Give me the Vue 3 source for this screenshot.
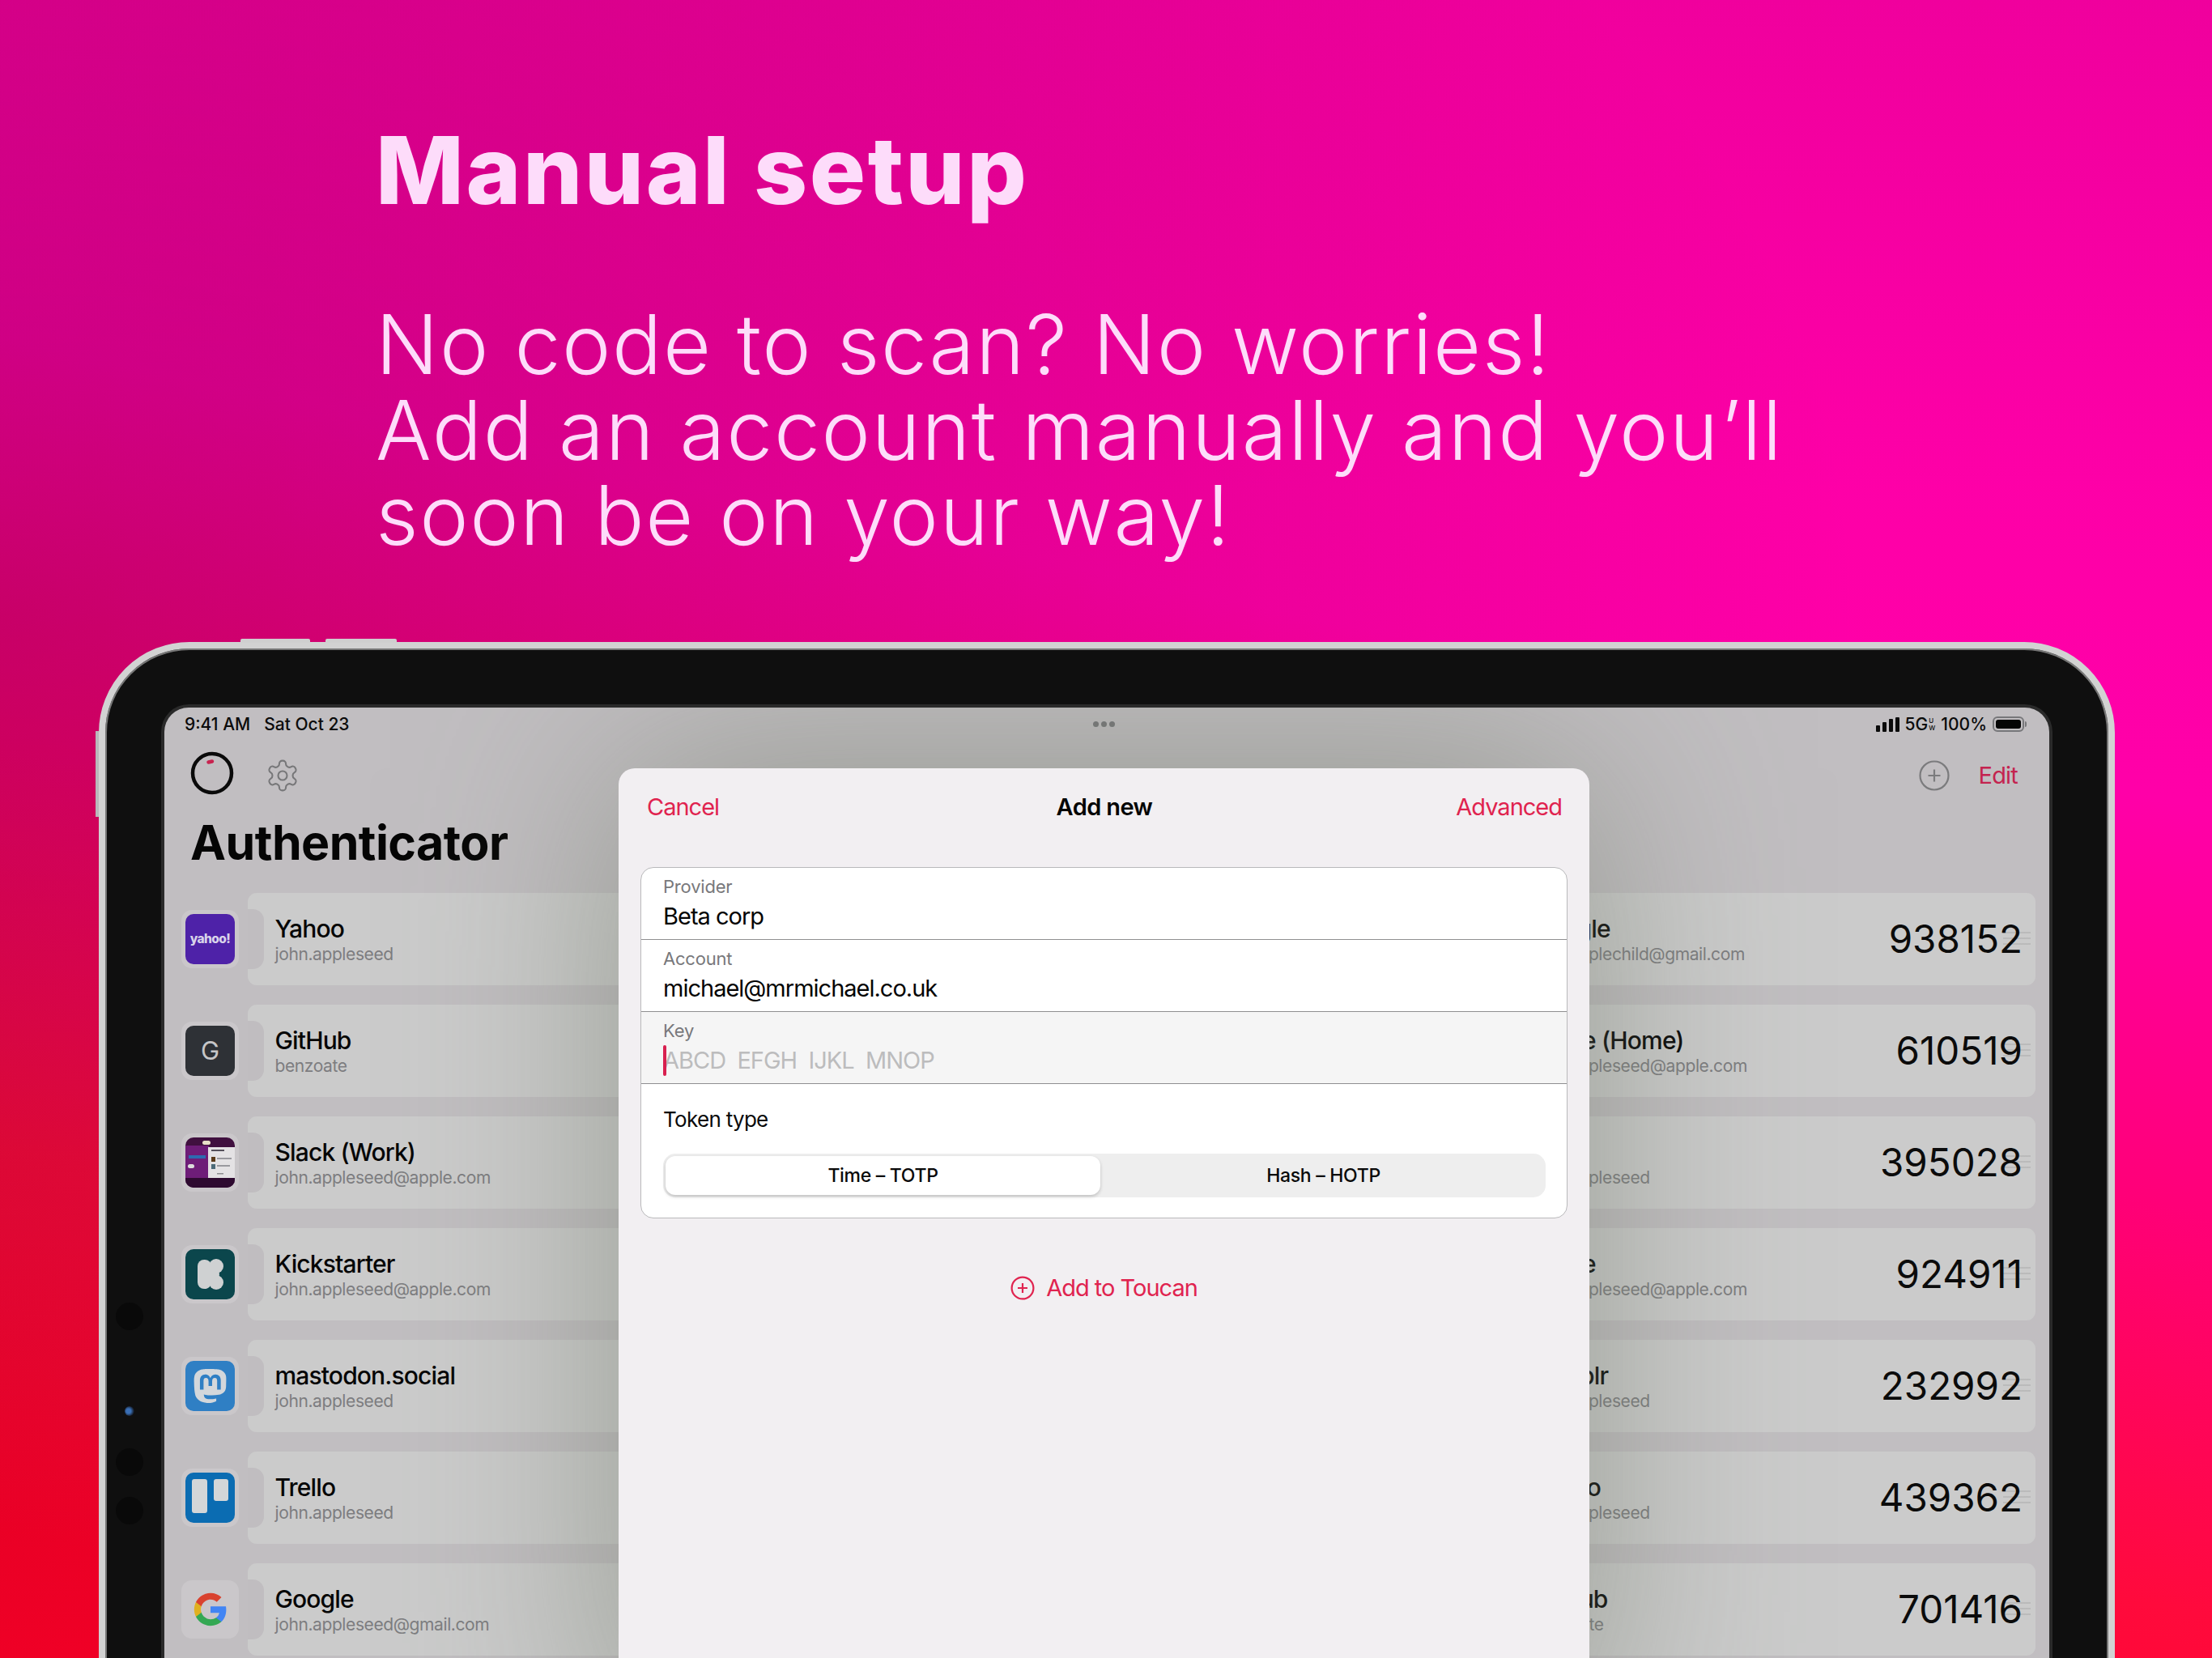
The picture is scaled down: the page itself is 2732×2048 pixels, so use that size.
<script setup>
const leftRows = [
  { name: 'Yahoo', sub: 'john.appleseed', icon: 'yahoo' },
  { name: 'GitHub', sub: 'benzoate', icon: 'github' },
  { name: 'Slack (Work)', sub: 'john.appleseed@apple.com', icon: 'slack' },
  { name: 'Kickstarter', sub: 'john.appleseed@apple.com', icon: 'kick' },
  { name: 'mastodon.social', sub: 'john.appleseed', icon: 'mastodon' },
  { name: 'Trello', sub: 'john.appleseed', icon: 'trello' },
  { name: 'Google', sub: 'john.appleseed@gmail.com', icon: 'google' },
]
const rightRows = [
  { name: 'Google', sub: 'john.applechild@gmail.com', code: '938152' },
  { name: 'Apple (Home)', sub: 'john.appleseed@apple.com', code: '610519' },
  { name: 'Box', sub: 'john.appleseed', code: '395028' },
  { name: 'Apple', sub: 'john.appleseed@apple.com', code: '924911' },
  { name: 'Tumblr', sub: 'john.appleseed', code: '232992' },
  { name: 'Yahoo', sub: 'john.appleseed', code: '439362' },
  { name: 'GitHub', sub: 'benzoate', code: '701416' },
]
const columns = [leftRows, rightRows]
const fields = [
  { label: 'Provider', value: 'Beta corp' },
  { label: 'Account', value: 'michael@mrmichael.co.uk' },
]
const keyPlaceholder = 'ABCD  EFGH  IJKL  MNOP'
</script>

<template>
  <div class="page">
    <header class="hero">
      <h1>Manual setup</h1>
      <p>No code to scan? No worries!<br />Add an account manually and you’ll<br />soon be on your way!</p>
    </header>

    <div class="device">
      <span class="hw vol-a"></span>
      <span class="hw vol-b"></span>
      <span class="hw side"></span>
      <span class="lens l1"></span>
      <span class="lens l2"></span>
      <span class="lens l3"></span>
      <span class="lens l4"></span>

      <div class="screen">
        <div class="status">
          <div class="status-left"><span>9:41 AM</span><span>Sat Oct 23</span></div>
          <div class="status-right">
            <span class="bars"><i></i><i></i><i></i><i></i></span>
            <span class="net">5G<span class="uw"><span>U</span><span>W</span></span></span>
            <span class="pct">100%</span>
            <span class="batt"><i></i></span>
          </div>
        </div>
        <div class="dots"><i></i><i></i><i></i></div>

        <div class="toolbar">
          <svg class="timer" width="54" height="54" viewBox="0 0 54 54">
            <circle cx="27" cy="27" r="24" fill="none" stroke="#0a0a0a" stroke-width="4.5" />
            <path d="M22.5 13.5 L27 12.5" stroke="#c8234f" stroke-width="4.5" stroke-linecap="round" />
          </svg>
          <svg class="gear" width="44" height="44" viewBox="0 0 24 24" fill="none" stroke="#777779" stroke-width="1.15">
            <path d="M12.22 2h-.44a2 2 0 0 0-2 2v.18a2 2 0 0 1-1 1.73l-.43.25a2 2 0 0 1-2 0l-.15-.08a2 2 0 0 0-2.73.73l-.22.38a2 2 0 0 0 .73 2.73l.15.1a2 2 0 0 1 1 1.72v.51a2 2 0 0 1-1 1.74l-.15.09a2 2 0 0 0-.73 2.73l.22.38a2 2 0 0 0 2.73.73l.15-.08a2 2 0 0 1 2 0l.43.25a2 2 0 0 1 1 1.73V20a2 2 0 0 0 2 2h.44a2 2 0 0 0 2-2v-.18a2 2 0 0 1 1-1.73l.43-.25a2 2 0 0 1 2 0l.15.08a2 2 0 0 0 2.73-.73l.22-.39a2 2 0 0 0-.73-2.73l-.15-.08a2 2 0 0 1-1-1.74v-.5a2 2 0 0 1 1-1.74l.15-.09a2 2 0 0 0 .73-2.73l-.22-.38a2 2 0 0 0-2.73-.73l-.15.08a2 2 0 0 1-2 0l-.43-.25a2 2 0 0 1-1-1.73V4a2 2 0 0 0-2-2z" />
            <circle cx="12" cy="12" r="3" />
          </svg>
          <svg class="plus" width="38" height="38" viewBox="0 0 38 38" fill="none" stroke="#7b7b7d" stroke-width="2.2">
            <circle cx="19" cy="19" r="17.5" />
            <path d="M19 11.5v15M11.5 19h15" />
          </svg>
          <span class="edit">Edit</span>
        </div>

        <h2 class="title">Authenticator</h2>

        <div class="lists">
          <div v-for="(rows, c) in columns" :key="c" class="col">
            <div v-for="row in rows" :key="row.name + row.sub" class="row">
              <div class="icon-wrap" :class="{ plain: row.icon === 'google' }">
                <div v-if="row.icon === 'yahoo'" class="icon yahoo">yahoo!</div>
                <div v-else-if="row.icon === 'github'" class="icon github">G</div>
                <svg v-else-if="row.icon === 'slack'" class="icon" viewBox="0 0 61 62">
                  <rect width="61" height="62" fill="#40103f" />
                  <rect y="10" width="29" height="40" fill="#6e1d78" />
                  <rect y="50" width="61" height="12" fill="#2e0a30" />
                  <rect x="28" y="12" width="33" height="38" fill="#e4e2e4" />
                  <rect x="4" y="22" width="21" height="4" fill="#2c6ab0" />
                  <rect x="21" y="4" width="10" height="5" rx="2.5" fill="#e8dfc8" />
                  <rect x="3" y="33" width="8" height="5" rx="2.5" fill="#dcdcdc" />
                  <rect x="32" y="15" width="16" height="2" fill="#55505a" />
                  <rect x="32" y="24" width="5" height="6" fill="#5a3a18" />
                  <rect x="39" y="25" width="18" height="2" fill="#9a9a9f" />
                  <rect x="32" y="33" width="5" height="6" fill="#4c6a78" />
                  <rect x="39" y="34" width="16" height="2" fill="#9a9a9f" />
                  <rect x="39" y="44" width="8" height="1.5" fill="#8d8d90" />
                </svg>
                <svg v-else-if="row.icon === 'kick'" class="icon" viewBox="0 0 61 62">
                  <rect width="61" height="62" fill="#0b464c" />
                  <g fill="#cfd1d2">
                    <rect x="15" y="13" width="17" height="36" rx="8" />
                    <circle cx="38" cy="21" r="9" />
                    <circle cx="38" cy="41" r="9" />
                    <rect x="24" y="20" width="15" height="22" />
                    <circle cx="36" cy="31" r="6" />
                  </g>
                </svg>
                <svg v-else-if="row.icon === 'mastodon'" class="icon" viewBox="0 0 61 62">
                  <rect width="61" height="62" fill="#2f7fc4" />
                  <g transform="translate(9.5 10) scale(1.75)">
                    <path fill="#d3d7db" d="M23.268 5.313c-.35-2.578-2.617-4.61-5.304-5.004C17.51.242 15.792 0 11.813 0h-.03c-3.98 0-4.835.242-5.288.309C3.882.692 1.496 2.518.917 5.127.64 6.412.61 7.837.661 9.143c.074 1.874.088 3.745.26 5.611.118 1.24.325 2.47.62 3.68.55 2.237 2.777 4.098 4.96 4.857 2.336.792 4.849.923 7.256.38.265-.061.527-.132.786-.213.585-.184 1.27-.39 1.774-.753a.057.057 0 0 0 .023-.043v-1.809a.052.052 0 0 0-.02-.041.053.053 0 0 0-.046-.01 20.282 20.282 0 0 1-4.709.545c-2.73 0-3.463-1.284-3.674-1.818a5.593 5.593 0 0 1-.319-1.433.053.053 0 0 1 .066-.054c1.517.363 3.072.546 4.632.546.376 0 .75 0 1.125-.01 1.57-.044 3.224-.124 4.768-.422.038-.008.077-.015.11-.024 2.435-.464 4.753-1.92 4.989-5.604.008-.145.03-1.52.03-1.67.002-.512.167-3.63-.024-5.545zm-3.748 9.195h-2.561V8.29c0-1.309-.55-1.976-1.67-1.976-1.23 0-1.846.79-1.846 2.35v3.403h-2.546V8.663c0-1.56-.617-2.35-1.848-2.35-1.112 0-1.668.668-1.67 1.977v6.218H4.822V8.102c0-1.31.337-2.35 1.011-3.12.696-.77 1.608-1.164 2.74-1.164 1.311 0 2.302.5 2.962 1.498l.638 1.06.638-1.06c.66-.999 1.65-1.498 2.96-1.498 1.13 0 2.043.395 2.74 1.164.675.77 1.012 1.81 1.012 3.12z" />
                  </g>
                </svg>
                <svg v-else-if="row.icon === 'trello'" class="icon" viewBox="0 0 61 62">
                  <rect width="61" height="62" fill="#0b6cb2" />
                  <rect x="8" y="8" width="19" height="42" rx="3" fill="#d3d6d8" />
                  <rect x="35" y="8" width="18" height="27" rx="3" fill="#d3d6d8" />
                </svg>
                <svg v-else-if="row.icon === 'google'" class="g-logo" viewBox="0 0 24 24">
                  <path fill="#4285F4" d="M22.56 12.25c0-.78-.07-1.53-.2-2.25H12v4.26h5.92c-.26 1.37-1.04 2.53-2.21 3.31v2.77h3.57c2.08-1.92 3.28-4.74 3.28-8.09z" />
                  <path fill="#34A853" d="M12 23c2.97 0 5.46-.98 7.28-2.66l-3.57-2.77c-.98.66-2.23 1.06-3.71 1.06-2.86 0-5.29-1.93-6.16-4.53H2.18v2.84C3.99 20.53 7.7 23 12 23z" />
                  <path fill="#E0B020" d="M5.84 14.09c-.22-.66-.35-1.36-.35-2.09s.13-1.43.35-2.09V7.07H2.18C1.43 8.55 1 10.22 1 12s.43 3.45 1.18 4.93l2.85-2.22.81-.62z" />
                  <path fill="#D9422F" d="M12 5.38c1.62 0 3.06.56 4.21 1.64l3.15-3.15C17.45 2.09 14.97 1 12 1 7.7 1 3.99 3.47 2.18 7.07l3.66 2.84c.87-2.6 3.3-4.53 6.16-4.53z" />
                </svg>
              </div>
              <div class="card">
                <div class="card-text">
                  <div class="name">{{ row.name }}</div>
                  <div class="sub">{{ row.sub }}</div>
                </div>
                <div v-if="row.code" class="code-wrap">
                  <span class="grip"></span>
                  <span class="code">{{ row.code }}</span>
                </div>
              </div>
            </div>
          </div>
        </div>

        <section class="modal">
          <nav class="nav">
            <span class="link">Cancel</span>
            <span class="nav-title">Add new</span>
            <span class="link end">Advanced</span>
          </nav>
          <div class="form">
            <div v-for="f in fields" :key="f.label" class="field">
              <div class="label">{{ f.label }}</div>
              <div class="value">{{ f.value }}</div>
            </div>
            <div class="field active">
              <div class="label">Key</div>
              <div class="value placeholder"><span class="caret"></span>{{ keyPlaceholder }}</div>
            </div>
            <div class="token">
              <div class="token-label">Token type</div>
              <div class="segmented">
                <span class="seg selected">Time – TOTP</span>
                <span class="seg">Hash – HOTP</span>
              </div>
            </div>
          </div>
          <div class="add">
            <svg width="30" height="30" viewBox="0 0 30 30" fill="none" stroke="#e0234f" stroke-width="2.2">
              <circle cx="15" cy="15" r="13.4" />
              <path d="M15 9v12M9 15h12" />
            </svg>
            <span>Add to Toucan</span>
          </div>
        </section>
      </div>
    </div>
  </div>
</template>

<style>
html, body { margin: 0; padding: 0; }
</style>

<style scoped>
.page {
  width: 2732px;
  height: 2048px;
  overflow: hidden;
  font-family: Inter, "Liberation Sans", sans-serif;
  background:
    radial-gradient(ellipse 2300px 1500px at 0 760px, rgba(70, 0, 30, 0.26), rgba(70, 0, 30, 0) 100%),
    linear-gradient(180deg, rgba(90, 0, 40, 0.07), rgba(90, 0, 40, 0) 30%),
    linear-gradient(90deg, rgba(90, 0, 40, 0.06), rgba(90, 0, 40, 0) 70%),
    linear-gradient(192deg, #fb00a6 0%, #ff00a8 38%, #ff0078 57%, #ff0a3c 76%, #ff0026 94%);
}
.hero { padding: 152px 0 0 464px; color: #fddcfa; }
.hero h1 { margin: 0; font-size: 115.5px; line-height: 116px; font-weight: 800; letter-spacing: 2.5px; }
.hero p { margin: 105px 0 0; font-size: 102px; line-height: 105.5px; font-weight: 300; letter-spacing: 1.6px; }

.device {
  position: relative;
  box-sizing: border-box;
  margin: 103px 0 0 122px;
  width: 2490px;
  height: 1500px;
  padding: 73px 73px 0 73px;
  background: #0f0f0f;
  border: 8px solid #d2d2d2;
  border-radius: 112px;
  box-shadow: inset 0 0 0 2px #777;
}
.hw { position: absolute; background: #cfcfcf; }
.vol-a { left: 167px; top: -12px; width: 86px; height: 5px; border-radius: 2px 2px 0 0; }
.vol-b { left: 272px; top: -12px; width: 88px; height: 5px; border-radius: 2px 2px 0 0; }
.side { left: -12px; top: 102px; width: 4px; height: 106px; background: #b9b9bb; }
.lens { position: absolute; left: 13px; width: 34px; height: 34px; border-radius: 50%; background: #090909; }
.l1 { top: 808px; }
.l2 { top: 936px; left: 24px; width: 12px; height: 12px; background: radial-gradient(circle at 40% 50%, #3a6fb5 30%, #101218 75%); }
.l3 { top: 988px; }
.l4 { top: 1048px; }

.screen {
  position: relative;
  height: 1400px;
  background: #c1bec1;
  border-radius: 30px 30px 0 0;
  box-shadow: 0 0 0 4px #2a2a2a;
  overflow: hidden;
}
.status {
  height: 42px;
  padding: 0 31px 0 25px;
  display: flex;
  justify-content: space-between;
  align-items: center;
  font-size: 21px;
  color: #0b0b0b;
}
.status-left { display: flex; gap: 17px; font-weight: 500; }
.status-right { display: flex; align-items: center; gap: 7px; font-weight: 500; }
.bars { display: flex; align-items: flex-end; gap: 3px; height: 18px; }
.bars i { display: block; width: 5px; background: #0b0b0b; border-radius: 1px; }
.bars i:nth-child(1) { height: 8px; }
.bars i:nth-child(2) { height: 12px; }
.bars i:nth-child(3) { height: 16px; }
.bars i:nth-child(4) { height: 18px; }
.net { display: inline-flex; align-items: center; }
.uw { display: inline-flex; flex-direction: column; font-size: 8px; line-height: 9px; margin-left: 1px; }
.batt {
  box-sizing: border-box;
  position: relative;
  width: 39px;
  height: 19px;
  padding: 2px;
  border: 2px solid #77777a;
  border-radius: 6px;
}
.batt i { display: block; height: 100%; background: #050505; border-radius: 3px; }
.batt::after {
  content: "";
  position: absolute;
  right: -5px;
  top: 4px;
  width: 2px;
  height: 7px;
  background: #77777a;
  border-radius: 0 2px 2px 0;
}
.dots { position: absolute; left: 1147px; top: 17px; display: flex; gap: 3px; }
.dots i { display: block; width: 7px; height: 7px; border-radius: 50%; background: #77777a; }

.toolbar { display: flex; align-items: center; margin-top: 12px; padding: 0 39px 0 32px; height: 54px; }
.gear { margin-left: 38px; margin-top: 6px; }
.plus { margin-left: auto; margin-top: 6px; margin-right: 2px; }
.edit { margin-left: 34px; margin-top: 6px; color: #c4234f; font-size: 29px; letter-spacing: -0.8px; }
.title { margin: 24px 0 0; padding-left: 32px; font-size: 59px; line-height: 70px; font-weight: 700; color: #050505; letter-spacing: -0.55px; }

.lists { display: flex; justify-content: space-between; margin-top: 27px; }
.col { width: 776px; display: flex; flex-direction: column; gap: 24px; }
.row { display: flex; align-items: center; height: 114px; padding: 0 17px 0 21px; gap: 11px; }
.icon-wrap {
  flex: none;
  width: 71px;
  height: 72px;
  box-sizing: border-box;
  padding: 5px;
  display: flex;
  align-items: center;
  justify-content: center;
  background: #cac7ca;
  border-radius: 13px;
}
.icon { display: flex; width: 61px; height: 62px; border-radius: 10px; align-items: center; justify-content: center; }
.g-logo { width: 44px; height: 44px; }
.yahoo { background: #4e22a8; color: #d8d3ea; font-weight: 800; font-size: 15.5px; letter-spacing: -0.6px; }
.github { background: #2e3136; color: #c6c6c8; font-size: 31px; font-weight: 400; }
.card {
  position: relative;
  flex: 1;
  height: 114px;
  box-sizing: border-box;
  padding: 0 16px 0 33.5px;
  display: flex;
  align-items: center;
  justify-content: space-between;
  background: #cbcbcb;
  border-radius: 11px;
}
.card::before {
  content: "";
  position: absolute;
  left: 0;
  top: 20px;
  bottom: 20px;
  width: 20px;
  background: #c0bdc0;
  border-radius: 0 14px 14px 0;
}
.card-text { padding-top: 2px; }
.name { font-size: 30px; line-height: 38px; font-weight: 500; color: #060606; letter-spacing: -0.85px; }
.sub { font-size: 21px; line-height: 28px; margin-top: -1px; color: #7d7d80; letter-spacing: -0.4px; }
.code-wrap { position: relative; }
.code { position: relative; font-size: 47.5px; color: #0b0b0b; letter-spacing: 0; }
.grip {
  position: absolute;
  right: -10px;
  top: 50%;
  width: 34px;
  height: 20px;
  margin-top: -9px;
  background: repeating-linear-gradient(180deg, rgba(120,120,120,.2) 0 2px, transparent 2px 7px);
}

.modal {
  position: absolute;
  left: 561px;
  top: 75px;
  width: 1199px;
  height: 1200px;
  background: #f2eff2;
  border-radius: 20px 20px 0 0;
  box-shadow: 0 0 340px rgba(110, 118, 100, 0.55);
}
.nav {
  height: 96px;
  padding: 0 34px 0 35px;
  display: grid;
  grid-template-columns: 1fr auto 1fr;
  align-items: center;
  margin-bottom: 26px;
  font-size: 29px;
}
.link { color: #e0234f; letter-spacing: -1px; }
.link.end { justify-self: end; }
.nav-title { color: #050505; font-weight: 600; letter-spacing: -0.6px; }
.form {
  margin: 0 27px;
  background: #fff;
  border: 1px solid #b9b9bb;
  border-radius: 16px;
  overflow: hidden;
}
.field { height: 89px; box-sizing: border-box; padding: 10px 27px 0; border-bottom: 1.5px solid #8f8f91; }
.field.active { background: #f5f5f5; }
.label { font-size: 22px; line-height: 26px; color: #78787b; letter-spacing: -0.2px; }
.value { position: relative; margin-top: 4px; font-size: 29px; line-height: 40px; color: #050505; letter-spacing: -1px; white-space: pre; }
.placeholder { color: #bcbcbd; letter-spacing: -1px; }
.caret { position: absolute; left: 0; top: 1px; width: 3.5px; height: 38px; border-radius: 2px; background: #d8204f; }
.token { padding: 26px 26px 25px 27px; }
.token-label { font-size: 26px; line-height: 36px; color: #0a0a0a; letter-spacing: -0.7px; }
.segmented {
  margin-top: 24px;
  height: 54px;
  display: flex;
  padding: 3px;
  box-sizing: border-box;
  background: #eeeeee;
  border-radius: 15px;
}
.seg {
  flex: 1;
  display: flex;
  align-items: center;
  justify-content: center;
  font-size: 23px;
  font-weight: 500;
  color: #0a0a0a;
  letter-spacing: -0.3px;
}
.seg.selected { flex: none; width: 537px; background: #fff; border-radius: 12px; box-shadow: 0 2px 4px rgba(0,0,0,.2); }
.seg:last-child { padding-left: 4px; }
.add {
  margin-top: 64px;
  height: 44px;
  display: flex;
  align-items: center;
  justify-content: center;
  gap: 14px;
  color: #e0234f;
  font-size: 29px;
  letter-spacing: -1px;
}
</style>
